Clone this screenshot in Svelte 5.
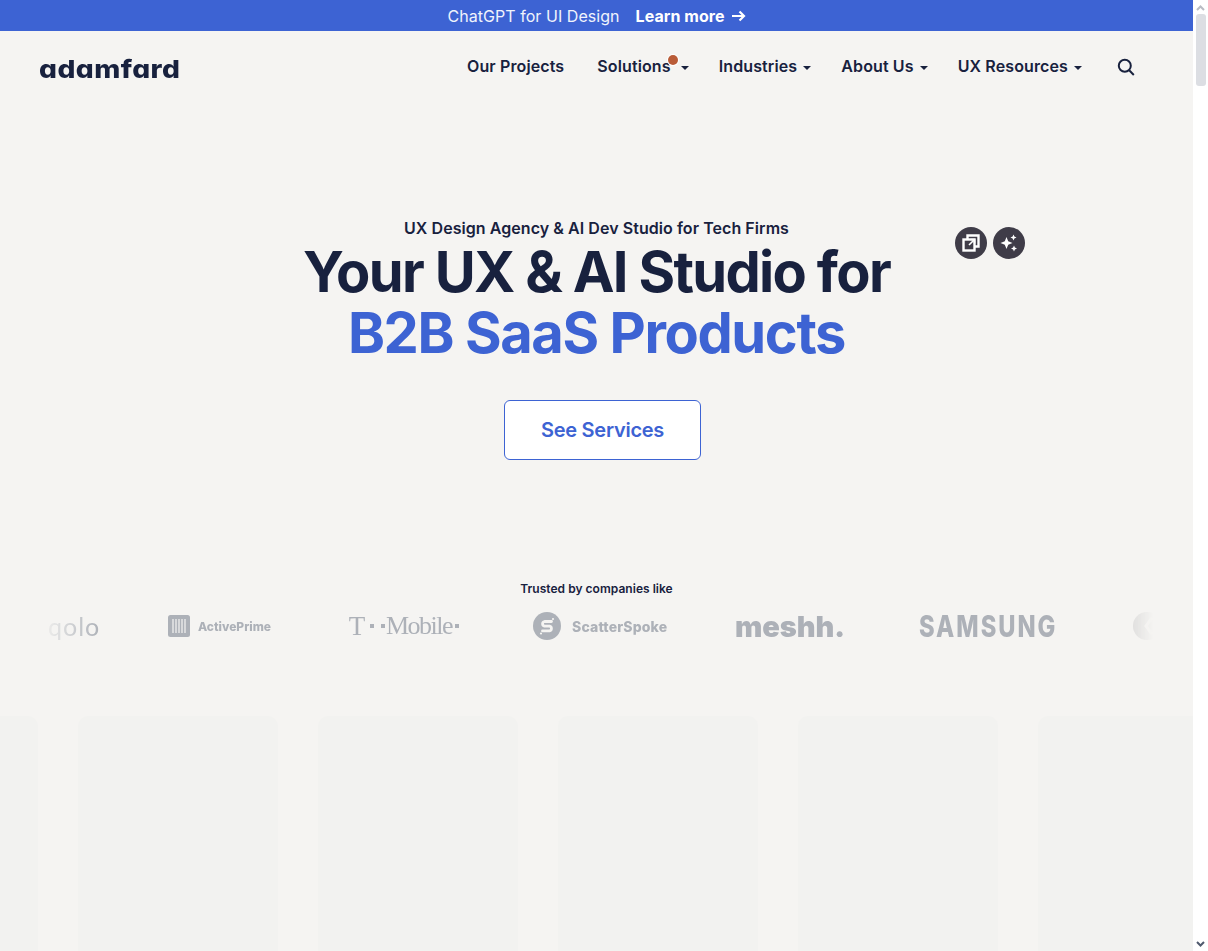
<script>
  const navItems = [
    { label: "Our Projects", caret: false },
    { label: "Solutions", caret: true, dot: true },
    { label: "Industries", caret: true },
    { label: "About Us", caret: true },
    { label: "UX Resources", caret: true }
  ];
  const cards = [0, 1, 2, 3, 4, 5];
</script>

<div class="window">
  <div class="page">
    <div class="banner">
      <span>ChatGPT for UI Design</span>
      <a href="#learn" class="learn">Learn more
        <svg width="15" height="12" viewBox="0 0 15 12" fill="none" stroke="#fff" stroke-width="2.200">
          <path d="M1 6h12M8.500 1.500 13 6l-4.500 4.500" />
        </svg>
      </a>
    </div>

    <header>
      <a href="#home" class="logo">adamfard</a>
      <nav>
        {#each navItems as item}
          <a href="#nav" class="nav-item" class:has-dot={item.dot}>
            <span class="nav-label">{item.label}{#if item.dot}<i class="dot"></i>{/if}</span>
            {#if item.caret}<i class="caret"></i>{/if}
          </a>
        {/each}
        <svg class="search" width="18" height="18" viewBox="0 0 18 18" fill="none" stroke="#18213e" stroke-width="2">
          <circle cx="7.800" cy="7.800" r="6" />
          <path d="m12.200 12.200 4.600 4.800" />
        </svg>
      </nav>
    </header>

    <section class="hero">
      <div class="float-icons">
        <span class="round">
          <svg width="18" height="18" viewBox="0 0 18 18" fill="none" stroke="#fff" stroke-width="2.400">
            <path d="M5.500 5V1.500h11v11H13" />
            <rect x="1.500" y="5.500" width="11" height="11" />
            <path d="M7 11l4.500-4.500M8.500 5.500H12.500V9.500" stroke-width="1.600" />
          </svg>
        </span>
        <span class="round">
          <svg width="20" height="20" viewBox="0 0 20 20" fill="#fff">
            <path d="M7.500 4 9.200 8.300l4.300 1.700-4.300 1.700L7.500 16 5.800 11.700 1.500 10l4.300-1.700z" />
            <path d="M14.500 1.500l.9 2.100 2.100.9-2.100.9-.9 2.100-.9-2.100-2.100-.9 2.100-.9z" />
            <path d="M15 12.500l.9 2.100 2.100.9-2.100.9-.9 2.100-.9-2.100-2.100-.9 2.100-.9z" />
          </svg>
        </span>
      </div>
      <p class="eyebrow">UX Design Agency &amp; AI Dev Studio for Tech Firms</p>
      <h1>Your UX &amp; AI Studio for<br /><span>B2B SaaS Products</span></h1>
      <a href="#services" class="cta">See Services</a>
    </section>

    <section class="trusted">
      <p>Trusted by companies like</p>
      <div class="marquee">
        <span class="qolo">qolo</span>
        <span class="active">
          <svg width="22" height="22" viewBox="0 0 22 22">
            <rect width="22" height="22" rx="2.500" fill="#adb1b8" />
            <path d="M5 4v14M8 4v14M11 4v14M14 4v14M17 4v14" stroke="#f5f4f2" stroke-width="1.200" />
          </svg>
          ActivePrime
        </span>
        <span class="tmobile">
          <b class="tee">T</b><i class="sq s1"></i><i class="sq s2"></i><b class="word">Mobile</b><i class="sq s3"></i>
        </span>
        <span class="scatter">
          <svg width="28" height="28" viewBox="0 0 28 28">
            <circle cx="14" cy="14" r="14" fill="#adb1b8" />
            <path d="M18.500 9.500h-7a2.400 2.400 0 0 0 0 4.700h5a2.400 2.400 0 0 1 0 4.700h-7" fill="none" stroke="#f5f4f2" stroke-width="2.800" stroke-linecap="round" />
            <circle cx="20" cy="7" r="1.100" fill="#f5f4f2" />
            <circle cx="8" cy="21.500" r="1.100" fill="#f5f4f2" />
          </svg>
          ScatterSpoke
        </span>
        <span class="meshh">meshh.</span>
        <span class="samsung"><em>SAMSUNG</em></span>
        <span class="last">
          <svg width="28" height="28" viewBox="0 0 28 28">
            <circle cx="14" cy="14" r="14" fill="#cfcfcf" />
            <path d="M19 6l-6 8 6 8" fill="none" stroke="#f5f4f2" stroke-width="3" />
          </svg>
        </span>
      </div>
    </section>

    <section class="cards">
      {#each cards as c}
        <div class="card"></div>
      {/each}
    </section>
  </div>

  <div class="scrollbar">
    <svg width="9" height="6" viewBox="0 0 9 6" fill="none" stroke="#b9bcc4" stroke-width="2"><path d="M1 5l3.500-3.500L8 5" /></svg>
    <div class="thumb"></div>
    <svg width="9" height="6" viewBox="0 0 9 6" fill="none" stroke="#505a6e" stroke-width="2"><path d="M1 1l3.500 3.500L8 1" /></svg>
  </div>
</div>

<style>
  :global(body) {
    margin: 0;
    background: #f5f4f2;
    font-family: Inter, "Liberation Sans", sans-serif;
    color: #18213e;
    overflow: hidden;
  }

  a {
    color: inherit;
    text-decoration: none;
  }

  .window {
    display: flex;
    height: 951px;
    overflow: hidden;
  }

  .page {
    width: 1193px;
    flex: none;
    overflow: hidden;
  }

  .scrollbar {
    flex: 1;
    background: #fff;
    display: flex;
    flex-direction: column;
    align-items: center;
    justify-content: space-between;
    padding: 5px 0 4px;
    box-sizing: border-box;
  }

  .thumb {
    width: 10px;
    height: 72px;
    background: #dcdee3;
    border-radius: 3px;
    margin: 3px 0 auto;
  }

  .banner {
    height: 31px;
    background: #3d63d3;
    color: #f0f3fc;
    font-size: 16px;
    letter-spacing: 0.05px;
    display: flex;
    align-items: center;
    justify-content: center;
    gap: 16px;
  }

  .learn {
    font-weight: 700;
    color: #fff;
    display: flex;
    align-items: center;
    gap: 6px;
  }

  header {
    height: 72px;
    display: flex;
    align-items: center;
    justify-content: space-between;
    padding: 0 58px 0 39px;
  }

  .logo {
    font-size: 25px;
    font-weight: 800;
    font-feature-settings: "cv11";
    letter-spacing: 0.4px;
    transform: scaleX(1.125);
    transform-origin: left center;
    position: relative;
    top: 2px;
  }

  nav {
    display: flex;
    align-items: center;
    gap: 30px;
    font-size: 16px;
    font-weight: 600;
    letter-spacing: 0.12px;
    position: relative;
    top: -1px;
  }

  .nav-item {
    display: flex;
    align-items: center;
    gap: 6px;
  }

  .nav-item:first-child {
    margin-right: 3px;
  }

  .has-dot {
    gap: 10px;
  }

  .nav-label {
    position: relative;
  }

  .dot {
    position: absolute;
    right: -7px;
    top: -1px;
    width: 10px;
    height: 10px;
    border-radius: 50%;
    background: #b95c38;
    box-shadow: 0 0 0 1px #fff;
  }

  .caret {
    width: 0;
    height: 0;
    border-left: 4px solid transparent;
    border-right: 4px solid transparent;
    border-top: 4px solid #18213e;
    margin-top: 3px;
  }

  .search {
    margin: 1px 0 -1px 5px;
  }

  .hero {
    position: relative;
    text-align: center;
    padding-top: 114px;
    height: 477px;
    box-sizing: border-box;
  }

  .eyebrow {
    margin: 0;
    font-size: 16px;
    font-weight: 600;
    letter-spacing: 0.06px;
    line-height: 22px;
  }

  h1 {
    margin: 3px 0 0;
    font-size: 56px;
    line-height: 61px;
    font-weight: 700;
    letter-spacing: -1.680px;
  }

  h1 span {
    color: #3d63d3;
    letter-spacing: -1.400px;
  }

  .cta {
    display: inline-block;
    margin: 36px 0 0 12px;
    width: 197px;
    height: 60px;
    line-height: 58px;
    box-sizing: border-box;
    border: 1px solid #3d63d3;
    border-radius: 6px;
    background: #fff;
    color: #3d63d3;
    font-size: 20px;
    font-weight: 600;
    letter-spacing: -0.250px;
  }

  .float-icons {
    position: absolute;
    left: 955px;
    top: 124px;
    display: flex;
    gap: 6px;
  }

  .round {
    width: 32px;
    height: 32px;
    border-radius: 50%;
    background: #3f3c48;
    display: flex;
    align-items: center;
    justify-content: center;
  }

  .trusted {
    text-align: center;
    height: 136px;
  }

  .trusted p {
    margin: 0;
    font-size: 12px;
    font-weight: 600;
    line-height: 18px;
    letter-spacing: 0.03px;
  }

  .marquee {
    margin: 6px 40px 0;
    width: 1113px;
    height: 44px;
    display: flex;
    align-items: center;
    color: #adb1b8;
    white-space: nowrap;
    overflow: hidden;
    -webkit-mask-image: linear-gradient(90deg, transparent 0, #000 60px, #000 1075px, transparent 1113px);
    mask-image: linear-gradient(90deg, transparent 0, #000 60px, #000 1075px, transparent 1113px);
  }

  .marquee > span {
    flex: none;
    display: flex;
    align-items: center;
  }

  .qolo {
    font-family: Lato, sans-serif;
    font-size: 25px;
    margin-left: 8px;
    width: 120px;
    letter-spacing: 1px;
  }

  .active {
    width: 180px;
    gap: 8px;
    font-size: 12px;
    font-weight: 800;
  }

  .tmobile {
    width: 185px;
    font-family: "Liberation Serif", serif;
    font-size: 25px;
  }

  .tmobile b {
    font-weight: 400;
  }

  .tee {
    width: 18px;
    font-size: 27px;
  }

  .word {
    font-size: 26px;
    letter-spacing: -1.500px;
  }

  .sq {
    flex: none;
    width: 4px;
    height: 4px;
    background: #adb1b8;
  }

  .s1 {
    margin: 0 7px 0 4px;
  }

  .s2 {
    margin-right: 1px;
  }

  .s3 {
    margin-left: 3px;
  }

  .scatter {
    width: 202px;
    gap: 11px;
    font-size: 14px;
    font-weight: 800;
    letter-spacing: 0.150px;
  }

  .meshh {
    width: 184px;
    font-size: 29px;
    font-weight: 900;
    letter-spacing: -0.100px;
  }

  .samsung {
    width: 214px;
    font-size: 30px;
    font-weight: 800;
    letter-spacing: 2.500px;
  }

  .samsung em {
    font-style: normal;
    transform: scaleX(0.79);
    transform-origin: left center;
  }

  .last {
    width: 28px;
    height: 28px;
  }

  .cards {
    display: flex;
    gap: 40px;
    margin-left: -162px;
  }

  .card {
    flex: none;
    width: 200px;
    height: 300px;
    background: #f2f2f0;
    border-radius: 10px;
  }
</style>
